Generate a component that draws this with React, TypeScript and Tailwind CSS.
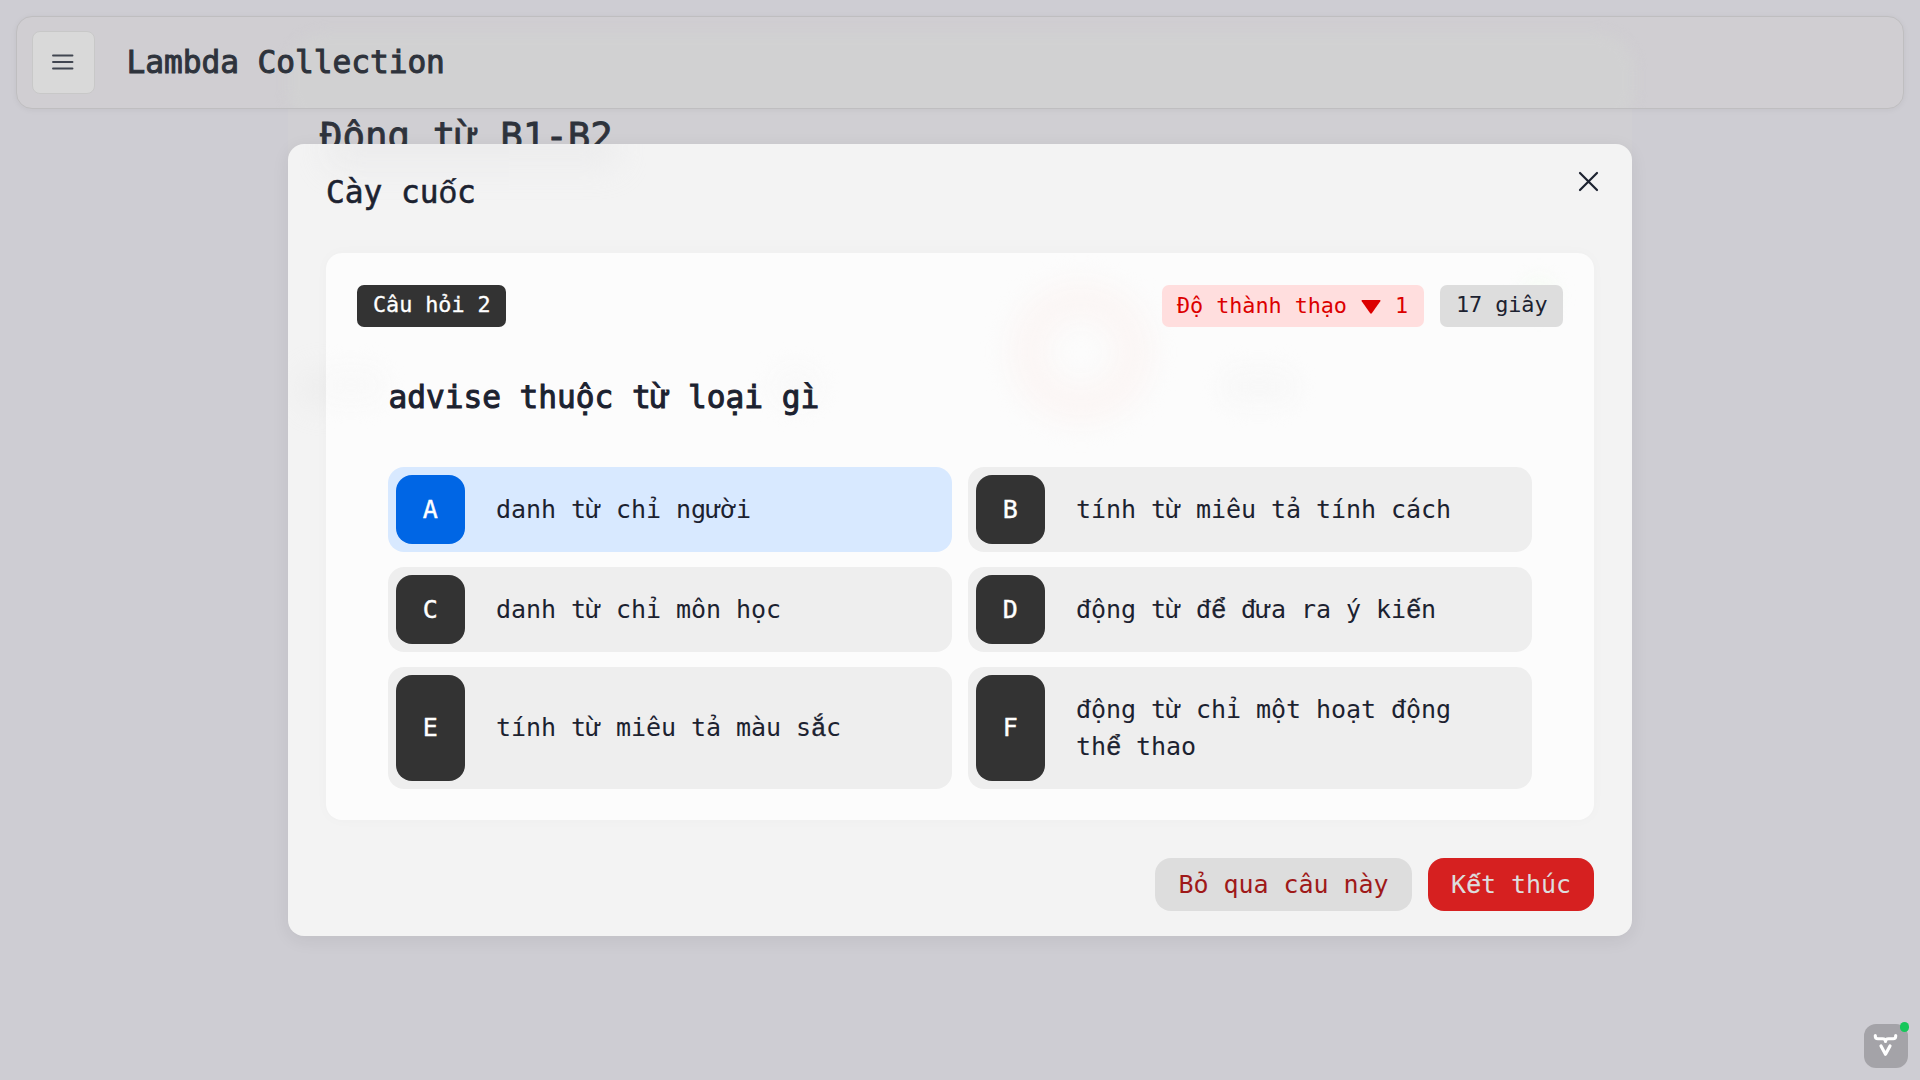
import { type ReactNode } from "react";

type Option = { key: string; text: string; selected?: boolean };

const options: Option[] = [
  { key: "A", text: "danh từ chỉ người", selected: true },
  { key: "B", text: "tính từ miêu tả tính cách" },
  { key: "C", text: "danh từ chỉ môn học" },
  { key: "D", text: "động từ để đưa ra ý kiến" },
  { key: "E", text: "tính từ miêu tả màu sắc" },
  { key: "F", text: "động từ chỉ một hoạt động thể thao" },
];

function Viet({ children }: { children: string }) {
  return (
    <>
      {children.split(/([ểốếắ])/).map((part, i) =>
        i % 2 ? (
          <span key={i} className="font-['Liberation_Mono',monospace] text-[1.03em] leading-none tracking-[-0.02em] [-webkit-text-stroke-width:0.35px]">
            {part}
          </span>
        ) : (
          part
        ),
      )}
    </>
  );
}

function Header() {
  return (
    <header className="relative z-10 mx-4 mt-4 flex h-[93px] items-center overflow-hidden rounded-2xl border border-[#bfbec0] bg-[#d0ced2] px-[14.5px] shadow-[0_1px_6px_rgba(0,0,0,0.05)]">
      <div className="absolute -bottom-5 left-[271px] top-4 w-[1346px] rounded-[36px] bg-[#d1d1d2] blur-[6px]" />
      <button className="relative flex h-[63px] w-[63px] items-center justify-center rounded-lg border border-[#c8c8c8] bg-[#d9d9d9]">
        <svg className="-mt-px" width="22" height="16" viewBox="0 0 22 16" fill="none" stroke="#414651" strokeWidth="1.9" strokeLinecap="round">
          <path d="M1 1.5H20.5M1 8H20.5M1 14.5H20.5" />
        </svg>
      </button>
      <h1 className="relative ml-8 text-[31.2px] leading-none text-[#2e333c] [-webkit-text-stroke:1px_#2e333c]">Lambda Collection</h1>
    </header>
  );
}

function BackdropGlow() {
  return (
    <div className="pointer-events-none absolute inset-0 overflow-hidden rounded-2xl">
      <div className="absolute left-[40px] top-[-14px] h-[36px] w-[290px] bg-[#e2e2e4] opacity-40 blur-[16px]" />
      <div className="absolute left-[10px] top-[225px] h-[40px] w-[90px] rounded-full bg-[#e2e2e2] opacity-30 blur-[14px]" />
    </div>
  );
}

function CardGlow() {
  return (
    <div className="pointer-events-none absolute inset-0 overflow-hidden rounded-2xl">
      <div className="absolute left-[683px] top-[27px] h-[144px] w-[144px] rounded-full border-[40px] border-[#fbf6f5] blur-[12px]" />
      <div className="absolute left-[895px] top-[114px] h-[40px] w-[76px] rounded-full bg-[#f8f8f8] blur-[10px]" />
      <div className="absolute left-[445px] top-[112px] h-[44px] w-[50px] rounded-full bg-[#f9f9f9] blur-[10px]" />
      <div className="absolute left-[-10px] top-[112px] h-[40px] w-[70px] rounded-full bg-[#f9f9f9] blur-[10px]" />
      <div className="absolute left-[1195px] top-[22px] h-[40px] w-[36px] rounded-full bg-[#f7fcf6] blur-[8px]" />
    </div>
  );
}

function Badge({ className, children }: { className: string; children: ReactNode }) {
  return (
    <div className={`flex h-[42px] items-center whitespace-nowrap rounded-[7px] text-[21.8px] leading-none ${className}`}>
      {children}
    </div>
  );
}

function Answer({ option }: { option: Option }) {
  return (
    <button
      className={`flex items-stretch rounded-2xl p-2 text-left text-[#1c2230] ${option.selected ? "bg-[#d8e9ff]" : "bg-[#eeeeee]"}`}
    >
      <span
        className={`flex w-[68.5px] shrink-0 items-center justify-center rounded-2xl text-white [-webkit-text-stroke:0.4px_white] ${option.selected ? "bg-[#0066e5]" : "bg-[#333333]"}`}
      >
        {option.key}
      </span>
      <span className="flex-1 self-center pl-[31.5px] pr-10 leading-[37.5px]">
        <Viet>{option.text}</Viet>
      </span>
    </button>
  );
}

function Dialog() {
  return (
    <section className="relative h-[792px] w-[1344px] rounded-2xl bg-[#f3f3f3] px-[38px] text-[#1c2230] shadow-[0_4px_18px_rgba(0,0,0,0.07)]">
      <BackdropGlow />
      <div className="relative flex h-[109px] items-start justify-between">
        <h2 className="mt-[29px] text-[31.2px] leading-[38px] [-webkit-text-stroke:0.6px_#1c2230]">
          <Viet>Cày cuốc</Viet>
        </h2>
        <button className="mr-[-5px] mt-[27px]">
          <svg width="21" height="21" viewBox="0 0 21 21" fill="none" stroke="#1c2230" strokeWidth="2.2" strokeLinecap="round">
            <path d="M2 2 19 19M19 2 2 19" />
          </svg>
        </button>
      </div>

      <div className="relative h-[567px] rounded-2xl bg-[#fcfcfc] px-[31px] pt-8 shadow-[0_0_14px_rgba(0,0,0,0.025)]">
        <CardGlow />
        <div className="relative flex items-start gap-4">
          <Badge className="mr-auto w-[149px] bg-[#333333] pb-[3px] pl-4 text-white [-webkit-text-stroke:0.3px_white]">Câu hỏi 2</Badge>
          <Badge className="w-[262px] bg-[#ffdede] pl-[15px] text-[#dc0000]">
            <span>Độ thành thạo</span>
            <svg className="ml-[14px] mt-[2px]" width="20" height="14" viewBox="0 0 20 14" fill="#dc0000">
              <path d="M1.2 0H18.8Q20 0 19.3 1.2L11 13Q10 14.4 9 13L.7 1.2Q0 0 1.2 0Z" />
            </svg>
            <span className="ml-[14px]">1</span>
          </Badge>
          <Badge className="w-[123px] bg-[#dddddd] pb-[2px] pl-4">17 giây</Badge>
        </div>

        <div className="relative px-[31px]">
          <h3 className="mt-[50px] h-[90px] pl-[0.5px] text-[31.2px] leading-[40px] [-webkit-text-stroke:1px_#1c2230]">advise thuộc từ loại gì</h3>
          <div className="grid grid-cols-2 grid-rows-[85px_85px_122px] gap-x-4 gap-y-[15px]">
            {options.map((option) => (
              <Answer key={option.key} option={option} />
            ))}
          </div>
        </div>
      </div>

      <div className="relative mt-[38px] flex justify-end gap-4">
        <button className="h-[53px] w-[257px] rounded-2xl bg-[#dddddd] text-[#9f1919]">Bỏ qua câu này</button>
        <button className="h-[53px] w-[166px] rounded-2xl bg-[#d62020] text-[#dddddd]">
          <Viet>Kết thúc</Viet>
        </button>
      </div>
    </section>
  );
}

function VaadinBadge() {
  return (
    <div className="absolute bottom-3 right-3 h-11 w-11 rounded-xl bg-[#a4a3a8]">
      <svg className="h-11 w-11" viewBox="0 0 44 44" fill="none" stroke="white" strokeLinecap="round" strokeLinejoin="round">
        <path d="M11.3 11.5V12.3Q11.3 14.8 13.8 14.8H18.5Q21.5 14.8 21.5 17.4Q21.5 14.8 24.5 14.8H29.2Q31.7 14.8 31.7 12.3V11.5" strokeWidth="3.1" />
        <path d="M17 22 21.5 30.2 26 22" strokeWidth="3.2" />
      </svg>
      <span className="absolute -right-[1px] -top-[2px] h-[10px] w-[9px] rounded-full bg-[#16c75a]" />
    </div>
  );
}

export default function App() {
  return (
    <div className="relative h-[1080px] w-[1920px] overflow-hidden bg-[#cecdd3] font-['DejaVu_Sans_Mono',monospace] text-[25px] tracking-[-0.002em]">
      <Header />
      <main className="mx-auto -mt-1 h-[60px] w-[1344px] bg-[#d0cfd3] pl-8 pt-[7px]">
        <h2 className="text-[37.5px] leading-[48px] text-[#2e333c] [-webkit-text-stroke:0.8px_#2e333c]">Động từ B1-B2</h2>
      </main>
      <div className="absolute inset-x-0 top-36 z-20 flex justify-center">
        <Dialog />
      </div>
      <VaadinBadge />
    </div>
  );
}
